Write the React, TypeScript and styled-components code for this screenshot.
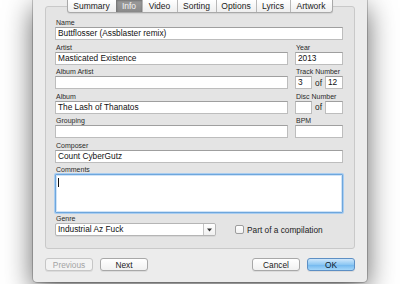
import styled, { createGlobalStyle, css } from "styled-components";

const GlobalStyle = createGlobalStyle`
  html, body {
    margin: 0;
    padding: 0;
    background: #ffffff;
    overflow: hidden;
  }
  * {
    box-sizing: border-box;
  }
`;

const FONT = `"Lucida Grande", "Liberation Sans", Arial, sans-serif`;

const Page = styled.div`
  width: 400px;
  height: 284px;
  padding-left: 33px;
  font-family: ${FONT};
`;

const Window = styled.div`
  width: 334px;
  height: 282px;
  background: #ececec;
  border-radius: 0 0 4px 4px;
  box-shadow: 0 8px 28px rgba(0, 0, 0, 0.62), 0 0 0 1px rgba(0, 0, 0, 0.2);
  padding: 0 12px;
  display: flex;
  flex-direction: column;
`;

const TabBar = styled.div`
  display: flex;
  align-self: center;
  height: 13px;
  margin-left: -1px;
  position: relative;
  z-index: 1;
  border: 1px solid #a9a9a9;
  border-top: none;
  border-radius: 0 0 3px 3px;
  background: linear-gradient(#ffffff, #eeeeee);
  box-shadow: 0 1px 1px rgba(0, 0, 0, 0.08);
`;

const Tab = styled.div<{ $active?: boolean }>`
  display: flex;
  align-items: center;
  justify-content: center;
  font-size: 8.5px;
  color: #1a1a1a;
  border-left: 1px solid #b8b8b8;
  &:first-child {
    border-left: none;
  }
  ${(p) =>
    p.$active &&
    css`
      background: linear-gradient(#9c9c9c, #8a8a8a);
      color: #f4f4f4;
      border-left-color: #7a7a7a;
      box-shadow: inset 0 1px 2px rgba(0, 0, 0, 0.25);
    `}
`;

const Panel = styled.div`
  margin-top: -7px;
  height: 243px;
  border: 1px solid #c9c9c9;
  border-radius: 3px;
  background: #e4e4e4;
  padding: 12px 11px 0 9px;
  display: flex;
  flex-direction: column;
`;

const Grid = styled.div`
  display: grid;
  grid-template-columns: 233px 48px;
  column-gap: 7px;
  row-gap: 3.5px;
`;

const Field = styled.div<{ $span?: boolean }>`
  display: flex;
  flex-direction: column;
  ${(p) =>
    p.$span &&
    css`
      grid-column: 1 / 3;
    `}
`;

const Label = styled.div`
  font-size: 7px;
  line-height: 7px;
  height: 8px;
  color: #2a2a2a;
  padding-left: 1px;
  white-space: nowrap;
`;

const Input = styled.div<{ $w?: number }>`
  height: 13px;
  background: #ffffff;
  border: 1px solid #bdbdbd;
  border-top-color: #9f9f9f;
  font-size: 8.3px;
  line-height: 11px;
  color: #111;
  padding-left: 2px;
  white-space: nowrap;
  overflow: hidden;
  ${(p) =>
    p.$w &&
    css`
      width: ${p.$w}px;
      flex: none;
    `}
`;

const Inline = styled.div`
  display: flex;
  align-items: center;
`;

const Of = styled.span`
  width: 13px;
  text-align: center;
  font-size: 8.3px;
  color: #222;
`;

const TextArea = styled.div`
  height: 39px;
  background: #ffffff;
  border: 1px solid #6ea6dc;
  box-shadow: 0 0 0 1px #a9cdf0, inset 0 0 0 1px #cfe3f7;
  border-radius: 1px;
  padding: 3px 2px;
`;

const Caret = styled.div`
  width: 1px;
  height: 9px;
  background: #111;
`;

const BottomRow = styled.div`
  display: flex;
  align-items: flex-end;
  margin-top: 2px;
`;

const Select = styled.div`
  width: 161px;
  height: 13px;
  display: flex;
  background: #ffffff;
  border: 1px solid #b5b5b5;
  border-radius: 2px;
  box-shadow: 0 1px 0 rgba(0, 0, 0, 0.06);
`;

const SelectText = styled.div`
  flex: 1;
  font-size: 8.3px;
  line-height: 11px;
  padding-left: 2px;
  color: #111;
`;

const SelectArrow = styled.div`
  width: 12px;
  border-left: 1px solid #c4c4c4;
  display: flex;
  align-items: center;
  justify-content: center;
  background: linear-gradient(#ffffff, #f0f0f0);
  border-radius: 0 2px 2px 0;
`;

const Check = styled.label`
  display: flex;
  align-items: center;
  gap: 3px;
  margin-left: 19px;
  height: 13px;
  font-size: 8.3px;
  color: #222;
`;

const CheckBox = styled.span`
  width: 9px;
  height: 9px;
  border: 1px solid #9d9d9d;
  border-radius: 2px;
  background: linear-gradient(#ffffff, #f1f1f1);
`;

const Buttons = styled.div`
  display: flex;
  align-items: center;
  margin-top: 9px;
  gap: 7px;
`;

const Spacer = styled.div`
  flex: 1;
`;

const Button = styled.div<{ $primary?: boolean; $disabled?: boolean }>`
  width: 48px;
  height: 13px;
  border-radius: 3px;
  border: 1px solid #a8a8a8;
  background: linear-gradient(#ffffff, #f1f1f1);
  box-shadow: 0 1px 0 rgba(0, 0, 0, 0.07);
  display: flex;
  align-items: center;
  justify-content: center;
  font-size: 8.3px;
  color: #1a1a1a;
  ${(p) =>
    p.$disabled &&
    css`
      color: #a3a3a3;
      border-color: #c6c6c6;
      background: #f3f3f3;
    `}
  ${(p) =>
    p.$primary &&
    css`
      border-color: #5d8fc4;
      background: linear-gradient(#cfe7fb, #8ec8f3 50%, #6fb6ee 51%, #a4d6f9);
      color: #0d1a28;
    `}
`;

const tabs = ["Summary", "Info", "Video", "Sorting", "Options", "Lyrics", "Artwork"];
const tabWidths = [48, 26, 35, 39, 40, 34, 42];

export default function App() {
  return (
    <Page>
      <GlobalStyle />
      <Window>
        <TabBar>
          {tabs.map((t, i) => (
            <Tab key={t} $active={t === "Info"} style={{ width: tabWidths[i] }}>
              {t}
            </Tab>
          ))}
        </TabBar>
        <Panel>
          <Grid>
            <Field $span>
              <Label>Name</Label>
              <Input>Buttflosser (Assblaster remix)</Input>
            </Field>
            <Field>
              <Label>Artist</Label>
              <Input>Masticated Existence</Input>
            </Field>
            <Field>
              <Label>Year</Label>
              <Input>2013</Input>
            </Field>
            <Field>
              <Label>Album Artist</Label>
              <Input />
            </Field>
            <Field>
              <Label>Track Number</Label>
              <Inline>
                <Input $w={17}>3</Input>
                <Of>of</Of>
                <Input $w={18}>12</Input>
              </Inline>
            </Field>
            <Field>
              <Label>Album</Label>
              <Input>The Lash of Thanatos</Input>
            </Field>
            <Field>
              <Label>Disc Number</Label>
              <Inline>
                <Input $w={17} />
                <Of>of</Of>
                <Input $w={18} />
              </Inline>
            </Field>
            <Field>
              <Label>Grouping</Label>
              <Input />
            </Field>
            <Field>
              <Label>BPM</Label>
              <Input />
            </Field>
            <Field $span>
              <Label>Composer</Label>
              <Input>Count CyberGutz</Input>
            </Field>
            <Field $span>
              <Label>Comments</Label>
              <TextArea>
                <Caret />
              </TextArea>
            </Field>
          </Grid>
          <BottomRow>
            <Field>
              <Label>Genre</Label>
              <Select>
                <SelectText>Industrial Az Fuck</SelectText>
                <SelectArrow>
                  <svg width="5" height="4" viewBox="0 0 5 4">
                    <path d="M0 0.5 L5 0.5 L2.5 3.5 Z" fill="#333" />
                  </svg>
                </SelectArrow>
              </Select>
            </Field>
            <Check>
              <CheckBox />
              Part of a compilation
            </Check>
          </BottomRow>
        </Panel>
        <Buttons>
          <Button $disabled>Previous</Button>
          <Button>Next</Button>
          <Spacer />
          <Button>Cancel</Button>
          <Button $primary>OK</Button>
        </Buttons>
      </Window>
    </Page>
  );
}
